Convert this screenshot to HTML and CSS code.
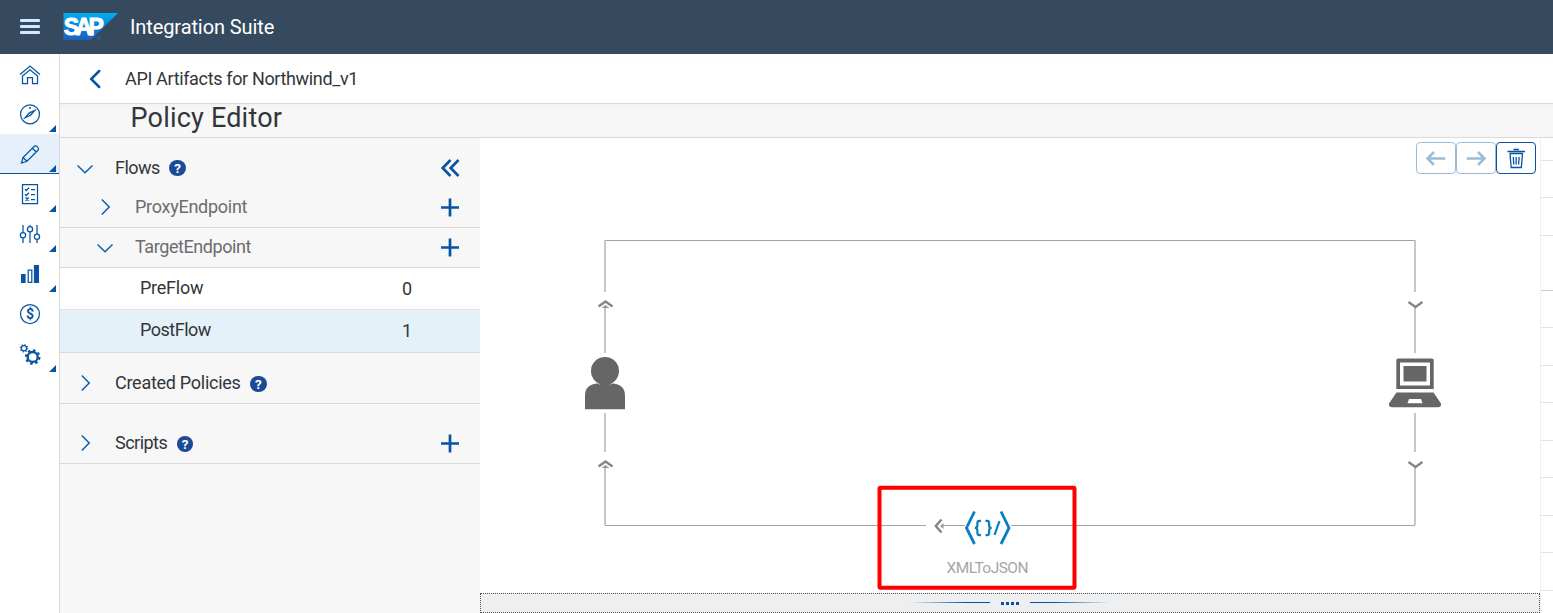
FILE: index.html
```html
<!DOCTYPE html>
<html lang="en">
<head>
<meta charset="utf-8">
<title>Integration Suite</title>
<link rel="stylesheet" href="styles.css">
</head>
<body>
<header class="shell">
  <svg class="menu" width="20" height="16" viewBox="0 0 20 16"><path d="M1.2 1.500H18.8M1.2 7.500H18.8M1.2 13.500H18.8" stroke="#d1e8ff" stroke-width="3" stroke-linecap="round"/></svg>
  <svg class="logo" width="55" height="28" viewBox="0 0 55 28">
    <defs><linearGradient id="sap" x1="0" y1="0" x2="0" y2="1"><stop offset="0" stop-color="#00b2ef"/><stop offset=".5" stop-color="#0a82d5"/><stop offset="1" stop-color="#1d61bc"/></linearGradient></defs>
    <path d="M.5 0H55L28 27H.5Z" fill="url(#sap)"/>
    <text class="logo-text" x="0.8" y="21.500" textLength="40" lengthAdjust="spacing">SAP</text>
    <circle cx="36" cy="25" r="1.500" fill="none" stroke="#2763a5" stroke-width="1"/>
  </svg>
  <span class="product">Integration Suite</span>
</header>
<div class="body">
  <nav class="rail">
    <a class="rail-item home"><svg width="22" height="22" viewBox="0 0 22 22"><path d="M1 10.500L11 2L21 10.500M3.500 11.500V19.500H8.500V13.500H13.500V19.500H18.500V11.500M3.500 12L11 5.700L18.500 12"/></svg></a>
    <a class="rail-item sub"><svg width="22" height="22" viewBox="0 0 22 22"><circle cx="11" cy="11.300" r="9.500"/><path class="needle" d="M4.500 15.800L10 9.500L17.300 6.300L12 12.500Z"/><path d="M9.300 12.600L12.300 9.900" class="gap"/><circle class="dot" cx="11" cy="5" r="1"/></svg></a>
    <a class="rail-item sub active"><svg width="22" height="22" viewBox="0 0 22 22"><path d="M2.500 20L4 14.500L15.500 3.100Q17 2.300 18.500 3.900Q20.200 5.500 19.200 7L8 18.300ZM13.500 5.300L17.200 9M4 14.500L8 18.300"/></svg></a>
    <a class="rail-item sub"><svg width="22" height="22" viewBox="0 0 22 22"><path d="M3.500 1.500H18.500V20.500H3.500ZM6 6.300L7.200 7.500L10 4.800M12 6.500H16M6 11.300L7.200 12.500L10 9.800M12 11.500H16M6.500 14.500L9.700 17.700M9.700 14.500L6.500 17.700M12 16.500H16"/></svg></a>
    <a class="rail-item sub"><svg width="22" height="22" viewBox="0 0 22 22"><path d="M4 2V9.500M4 15V20M11 2V3.500M11 9V20M18 2V11M18 16.500V20"/><circle cx="4" cy="12.200" r="2.600"/><circle cx="11" cy="6.300" r="2.600"/><circle cx="18" cy="13.700" r="2.600"/></svg></a>
    <a class="rail-item sub"><svg width="22" height="22" viewBox="0 0 22 22"><path class="solid" d="M2.600 11.500H6V19.300H2.600ZM15.500 2.600H19.400V19.300H15.500Z"/><path d="M9.200 7H12.800V19.300H9.200Z"/></svg></a>
    <a class="rail-item"><svg width="22" height="22" viewBox="0 0 22 22"><circle cx="11" cy="11" r="9.500"/><text class="dollar" x="11" y="16" text-anchor="middle">$</text></svg></a>
    <a class="rail-item sub gears"><svg width="22" height="22" viewBox="0 0 22 22"><circle cx="5" cy="5.200" r="2.600"/><circle cx="5" cy="5.200" r="3.500" stroke-dasharray="1.1 1.65" stroke-width="1.600"/><circle cx="13.700" cy="14" r="5" stroke-width="2.300"/><circle cx="13.700" cy="14" r="6.700" stroke-width="2.200" stroke-dasharray="2.600 2.662"/></svg></a>
  </nav>
  <main class="content">
    <div class="crumb">
      <svg width="12" height="20" viewBox="0 0 12 20"><path d="M10.200 2L2.200 10L10.200 18" fill="none" stroke="#0854a0" stroke-width="2.500" stroke-linecap="round"/></svg>
      <span class="crumb-text">API Artifacts for Northwind_v1</span>
    </div>
    <div class="subhead"><h1 class="heading">Policy Editor</h1></div>
    <div class="workspace">
      <aside class="panel">
        <div class="row flows">
          <svg class="chev" width="20" height="20" viewBox="0 0 20 20"><path d="M2.500 7.500L10 14.800L17.500 7.500"/></svg>
          <span class="label l-flows">Flows</span><span class="help">?</span>
          <svg class="action" width="20" height="20" viewBox="0 0 20 20"><path d="M10.500 2L2.700 10L10.500 18M18.500 2L10.700 10L18.500 18"/></svg>
        </div>
        <div class="row nested line">
          <svg class="chev" width="20" height="20" viewBox="0 0 20 20"><path d="M6.800 2.500L14.200 10L6.800 17.500"/></svg>
          <span class="label l-proxy">ProxyEndpoint</span>
          <svg class="action plus" width="20" height="20" viewBox="0 0 20 20"><path d="M1 10.500H19M10 1.500V19.500"/></svg>
        </div>
        <div class="row nested line">
          <svg class="chev" width="20" height="20" viewBox="0 0 20 20"><path d="M2.500 7.500L10 14.800L17.500 7.500"/></svg>
          <span class="label l-target">TargetEndpoint</span>
          <svg class="action plus" width="20" height="20" viewBox="0 0 20 20"><path d="M1 10.500H19M10 1.500V19.500"/></svg>
        </div>
        <div class="row leaf"><span class="label l-pre">PreFlow</span><span class="count">0</span></div>
        <div class="row leaf selected"><span class="label l-post">PostFlow</span><span class="count">1</span></div>
        <div class="row created line">
          <svg class="chev" width="20" height="20" viewBox="0 0 20 20"><path d="M6.800 2.500L14.200 10L6.800 17.500"/></svg>
          <span class="label l-created">Created Policies</span><span class="help">?</span>
        </div>
        <div class="row scripts line">
          <svg class="chev" width="20" height="20" viewBox="0 0 20 20"><path d="M6.800 2.500L14.200 10L6.800 17.500"/></svg>
          <span class="label l-scripts">Scripts</span><span class="help">?</span>
          <svg class="action plus" width="20" height="20" viewBox="0 0 20 20"><path d="M1 10.500H19M10 1.500V19.500"/></svg>
        </div>
      </aside>
      <section class="editor">
        <div class="canvas">
          <svg class="diagram" width="1060" height="455" viewBox="480 138 1060 455">
            <g class="wire-h"><path d="M604 240.500H1415M605 525.500H926M942 525.500H965M1011 525.500H1415"/></g>
            <g class="wire-v"><path d="M605 240V292M605 307V353M605 413V452M605 467V525M1415 240V292M1415 307V353M1415 413V452M1415 467V525"/></g>
            <g class="tip"><path d="M598.500 306.500L605.500 301.500L612.500 306.500M598.500 466.500L605.500 461.500L612.500 466.500M1408.500 302L1415.500 307L1422.500 302M1408.500 462L1415.500 467L1422.500 462M941.500 519.500L935.800 526L941.500 532.500"/></g>
            <g class="tip-fill"><path d="M601.500 308L605.500 305L609.500 308ZM601.500 468L605.500 465L609.500 468ZM943.500 523L940 526L943.500 529Z"/></g>
            <g class="node">
              <circle cx="605" cy="371" r="14"/>
              <path d="M585 409.300V396Q585 384 598 383.500Q605 389 612 383.500Q625 384 625 396V409.300Z"/>
              <path d="M600 381H610V388H600Z"/>
              <path fill-rule="evenodd" d="M1398 358.500H1432Q1433.700 358.500 1433.700 360V389H1396.300V360Q1396.300 358.500 1398 358.500ZM1400 362.500V385.500H1430V362.500Z"/>
              <path d="M1403.500 366H1426.500V381.500H1403.500Z"/>
              <path fill-rule="evenodd" d="M1396.500 392.500H1433.500L1441 403.500Q1441.500 407.300 1438 407.300H1392Q1388.500 407.300 1389 403.500ZM1409 399L1407.500 403.200H1422.500L1421 399Z"/>
            </g>
            <g class="policy">
              <path d="M974.500 511.500L966.500 528L974.500 544M1001 511.500L1009 528L1001 544" stroke-width="2.800"/>
              <path d="M999.500 521L994.500 535" stroke-width="2.200"/>
              <path d="M981 520.800H979.500Q977.400 520.800 977.400 523V525.500Q977.400 528 974.800 528Q977.400 528 977.400 530.500V533Q977.400 535.200 979.500 535.200H981M985.500 520.800H987Q989.100 520.800 989.100 523V525.500Q989.100 528 991.700 528Q989.100 528 989.100 530.500V533Q989.100 535.200 987 535.200H985.500" stroke-width="2.200"/>
            </g>
            <text class="policy-name" x="946.500" y="573" textLength="82">XMLToJSON</text>
            <rect class="highlight" x="879.500" y="487.700" width="195" height="100" rx="1"/>
          </svg>
          <div class="tools">
            <button class="tool off"><svg width="22" height="20" viewBox="0 0 22 20"><path d="M20.500 10.500H3M9 4L2.500 10.500L9 17" stroke-width="2.500"/></svg></button>
            <button class="tool off"><svg width="22" height="20" viewBox="0 0 22 20"><path d="M1.500 10.500H19M13 4L19.500 10.500L13 17" stroke-width="2.500"/></svg></button>
            <button class="tool"><svg width="20" height="22" viewBox="0 0 20 22"><path d="M1.500 4.500H19M7.500 2.500H13M3.500 6.500H17M4 7L5.200 20.500H15.300L16.500 7M7.300 10L7.800 17.500M10.200 10V17.500M13.100 10L12.600 17.500" stroke-width="1.300"/></svg></button>
          </div>
        </div>
        <div class="splitter"><i class="fade left"></i><span class="grip"><i></i><i></i><i></i><i></i></span><i class="fade right"></i></div>
      </section>
      <aside class="strip"><i class="first"></i><i></i><i></i><i class="tall"></i><i></i><i class="b"></i><i></i><i class="b"></i><i></i><i class="b"></i><i></i><i class="b"></i></aside>
    </div>
  </main>
</div>
</body>
</html>
```

FILE: styles.css
```css
* { box-sizing: border-box; }
body { margin: 0; width: 1553px; height: 613px; overflow: hidden; background: #fff; color: #32363a; font-family: Roboto, "Liberation Sans", sans-serif; font-size: 18px; }
svg { display: block; flex: none; }
.shell { display: flex; align-items: center; height: 54px; padding-left: 20px; background: #354a5f; color: #fff; }
.logo { margin-left: 23px; margin-top: 0; }
.logo-text { font: bold 23px "Liberation Sans", sans-serif; fill: #fff; stroke: #fff; stroke-width: .9; }
.product { margin-left: 12px; font-size: 20px; line-height: 24px; letter-spacing: -.1px; }
.body { display: flex; height: 559px; }
.rail { flex: none; width: 60px; border-right: 1px solid #d9d9d9; }
.rail-item { position: relative; display: flex; align-items: center; justify-content: center; height: 40px; padding-left: 1px; }
.rail-item.home { padding-top: 1px; }
.rail-item svg { fill: none; stroke: #0854a0; stroke-width: 1.25; }
.rail-item .solid { fill: #0854a0; }
.rail-item .needle { fill: #0854a0; stroke-width: .5; }
.rail-item .gap { stroke: #fff; stroke-width: 1; }
.rail-item .dot { fill: #0854a0; stroke: none; }
.rail-item.active { background: #e5f0fa; border-bottom: 1px solid #0854a0; }
.rail-item.sub::after { content: ""; position: absolute; right: 3px; bottom: 2px; border-left: 7px solid transparent; border-bottom: 7px solid #0854a0; }
.rail-item.active::after { bottom: 1px; }
.rail-item .dollar { font: bold 14px Roboto, sans-serif; fill: #0854a0; stroke: none; }
.content { flex: 1; min-width: 0; }
.crumb { display: flex; align-items: center; height: 50px; padding-left: 29px; border-bottom: 1px solid #d9d9d9; }
.crumb-text { margin-left: 24px; white-space: nowrap; letter-spacing: -.35px; }
.subhead { height: 34px; background: linear-gradient(#f2f2f2, #f7f7f7 5px); border-bottom: 1px solid #d9d9d9; padding-left: 70.5px; }
.heading { margin: 0; font-size: 27px; font-weight: 400; line-height: 28px; letter-spacing: .2px; }
.workspace { display: flex; height: 475px; }
.panel { flex: none; width: 420px; background: #f7f7f7; }
.row { display: flex; align-items: center; padding: 0 20px 0 15px; }
.line { border-bottom: 1px solid #d9d9d9; }
.flows { height: 50px; padding-top: 10px; }
.nested { height: 40px; padding: 0 20px 1px 35px; color: #6a6d70; }
.nested:nth-child(2) { padding-bottom: 2px; }
.leaf { height: 41px; padding-left: 80px; padding-bottom: 2px; background: #fff; }
.selected { height: 43px; background: #e5f1f9; border-top: 1px solid #e4e4e4; }
.created { height: 52px; padding-top: 10px; border-top: 1px solid #d9d9d9; }
.scripts { height: 60px; padding-top: 19px; }
.label { margin-left: 20px; line-height: 22px; white-space: nowrap; }
.leaf .label { margin-left: 0; }
.l-flows { letter-spacing: -.5px; }
.l-proxy { letter-spacing: -.27px; }
.l-target { letter-spacing: -.42px; }
.l-pre { letter-spacing: -.25px; }
.l-post { letter-spacing: -.5px; }
.l-created { letter-spacing: -.27px; }
.l-scripts { letter-spacing: -.52px; }
.chev { fill: none; stroke: #0a5fb0; stroke-width: 1.5; }
.action { margin-left: auto; fill: none; stroke: #0854a0; stroke-width: 2.7; }
.help { margin: 1px 0 0 9.5px; width: 16.5px; height: 16px; border-radius: 50%; background: #1b4a96; color: #fff; font-size: 13.5px; font-weight: 700; line-height: 16px; text-align: center; }
.flows .help { margin-top: 0; }
.count { margin-left: auto; width: 60px; margin-right: -2px; padding-top: 1px; }
.editor { flex: none; width: 1060px; }
.canvas { position: relative; height: 455px; }
.wire-h { fill: none; stroke: #a3a3a3; stroke-width: 1; }
.wire-v { fill: none; stroke: #c6c6c6; stroke-width: 2; }
.tip { fill: none; stroke: #858585; stroke-width: 2.4; }
.tip-fill { fill: #999; }
.node { fill: #666; }
.policy { fill: none; stroke: #0a7cc4; }
.policy-name { font-size: 15.5px; fill: #a5a6a7; }
.highlight { fill: none; stroke: #f00; stroke-width: 4; }
.tools { position: absolute; top: 4px; right: 4px; display: flex; }
.tool { display: flex; align-items: center; justify-content: center; width: 40px; height: 32px; padding: 0; background: #fff; border: 1px solid #0854a0; border-radius: 4px; }
.tool svg { fill: none; stroke: #0854a0; }
.tool.off { border-color: #9cbbd9; }
.tool.off svg { stroke: #9cbbd9; }
.splitter { display: flex; align-items: center; justify-content: center; gap: 11px; height: 20px; padding-bottom: 2px; background: #edeff0; border: 1px dotted #555; }
.fade { width: 80px; height: 1px; }
.fade.left { background: linear-gradient(to right, transparent, #0854a0 70%); }
.fade.right { background: linear-gradient(to left, transparent, #0854a0 70%); }
.grip { display: flex; gap: 2px; padding-top: 2px; }
.grip i { width: 3px; height: 3px; background: #0854a0; }
.strip { flex: 1; border-left: 1px solid #efefef; }
.strip i { display: block; height: 37px; border-bottom: 1px solid #e4e4e4; }
.strip i:nth-child(3), .strip .b { height: 38px; }
.strip .first { height: 23px; }
.strip .tall { height: 55px; border-bottom-color: #cfcfcf; }
```
